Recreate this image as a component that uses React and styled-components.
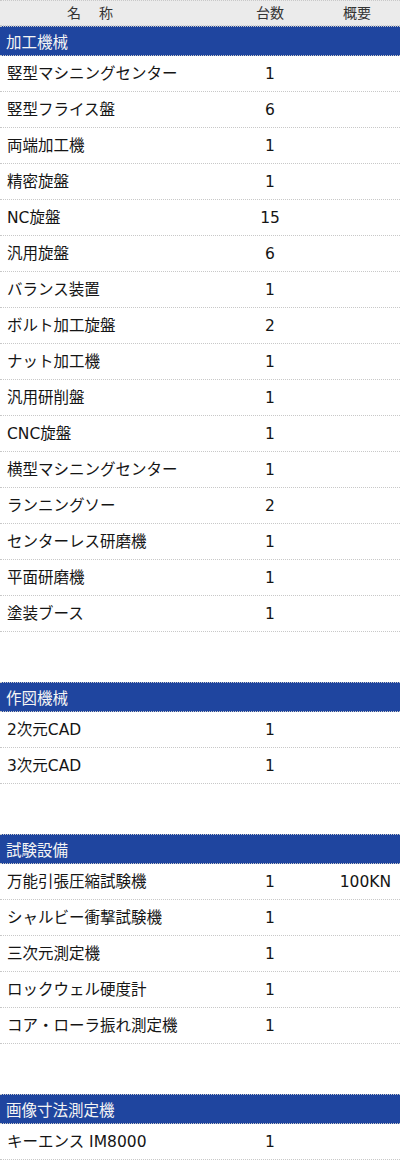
import React from 'react'
import styled, {createGlobalStyle} from "styled-components";

const GlobalStyle = createGlobalStyle`
  body {
    margin: 0;
    background: #fff;
    font-family: "DejaVu Sans", "Noto Sans CJK JP", sans-serif;
    color: #151515;
  }
`;

const Container = styled.div`
  width: 400px;
`;
const Section = styled.section`
  margin-bottom: 50px;
  &:last-child {
    margin-bottom: 0;
  }
`;
const HeadRow = styled.div`
  display: grid;
  grid-template-columns: 226px 88px 86px;
  height: 24px;
  align-items: center;
  background: #ebebeb;
  border-top: 1px dotted #c8c8c8;
  border-bottom: 1px dotted #c8c8c8;
  font-size: 14px;
  line-height: 20px;
  color: #333;
`;
const HeadCell = styled.div`
  text-align: center;
  padding-right: ${props => props.$pr || 0}px;
  letter-spacing: ${props => props.$ls || 0}px;
`;
const Title = styled.div`
  height: 28px;
  display: flex;
  align-items: center;
  padding-left: 6px;
  background: #1f459f;
  border-top: 1px dotted #c8c8c8;
  border-bottom: 1px dotted #c8c8c8;
  color: #f4f4f4;
  font-size: 15.5px;
`;
const Row = styled.div`
  display: grid;
  grid-template-columns: 226px 88px 86px;
  height: 35px;
  align-items: center;
  border-bottom: 1px dotted #c8c8c8;
  font-size: 15.5px;
  line-height: 22px;
`;
const Name = styled.div`
  padding-left: 7px;
  white-space: nowrap;
`;
const Count = styled.div`
  text-align: center;
`;
const Note = styled.div`
  text-align: right;
  padding-right: 9px;
`;

const sections = [
    {
        title: '加工機械',
        items: [
            ['竪型マシニングセンター', '1'],
            ['竪型フライス盤', '6'],
            ['両端加工機', '1'],
            ['精密旋盤', '1'],
            ['NC旋盤', '15'],
            ['汎用旋盤', '6'],
            ['バランス装置', '1'],
            ['ボルト加工旋盤', '2'],
            ['ナット加工機', '1'],
            ['汎用研削盤', '1'],
            ['CNC旋盤', '1'],
            ['横型マシニングセンター', '1'],
            ['ランニングソー', '2'],
            ['センターレス研磨機', '1'],
            ['平面研磨機', '1'],
            ['塗装ブース', '1'],
        ]
    },
    {
        title: '作図機械',
        items: [
            ['2次元CAD', '1'],
            ['3次元CAD', '1'],
        ]
    },
    {
        title: '試験設備',
        items: [
            ['万能引張圧縮試験機', '1', '100KN'],
            ['シャルビー衝撃試験機', '1'],
            ['三次元測定機', '1'],
            ['ロックウェル硬度計', '1'],
            ['コア・ローラ振れ測定機', '1'],
        ]
    },
    {
        title: '画像寸法測定機',
        items: [
            ['キーエンス IM8000', '1'],
        ]
    },
]

const App = () => {
    return (
        <Container>
            <GlobalStyle/>
            <HeadRow>
                <HeadCell $pr={44} $ls={2}>名　称</HeadCell>
                <HeadCell>台数</HeadCell>
                <HeadCell>概要</HeadCell>
            </HeadRow>
            {sections.map(sec => (
                <Section key={sec.title}>
                    <Title>{sec.title}</Title>
                    {sec.items.map(([name, count, note]) => (
                        <Row key={name}>
                            <Name>{name}</Name>
                            <Count>{count}</Count>
                            <Note>{note}</Note>
                        </Row>
                    ))}
                </Section>
            ))}
        </Container>
    )
}
export default App
